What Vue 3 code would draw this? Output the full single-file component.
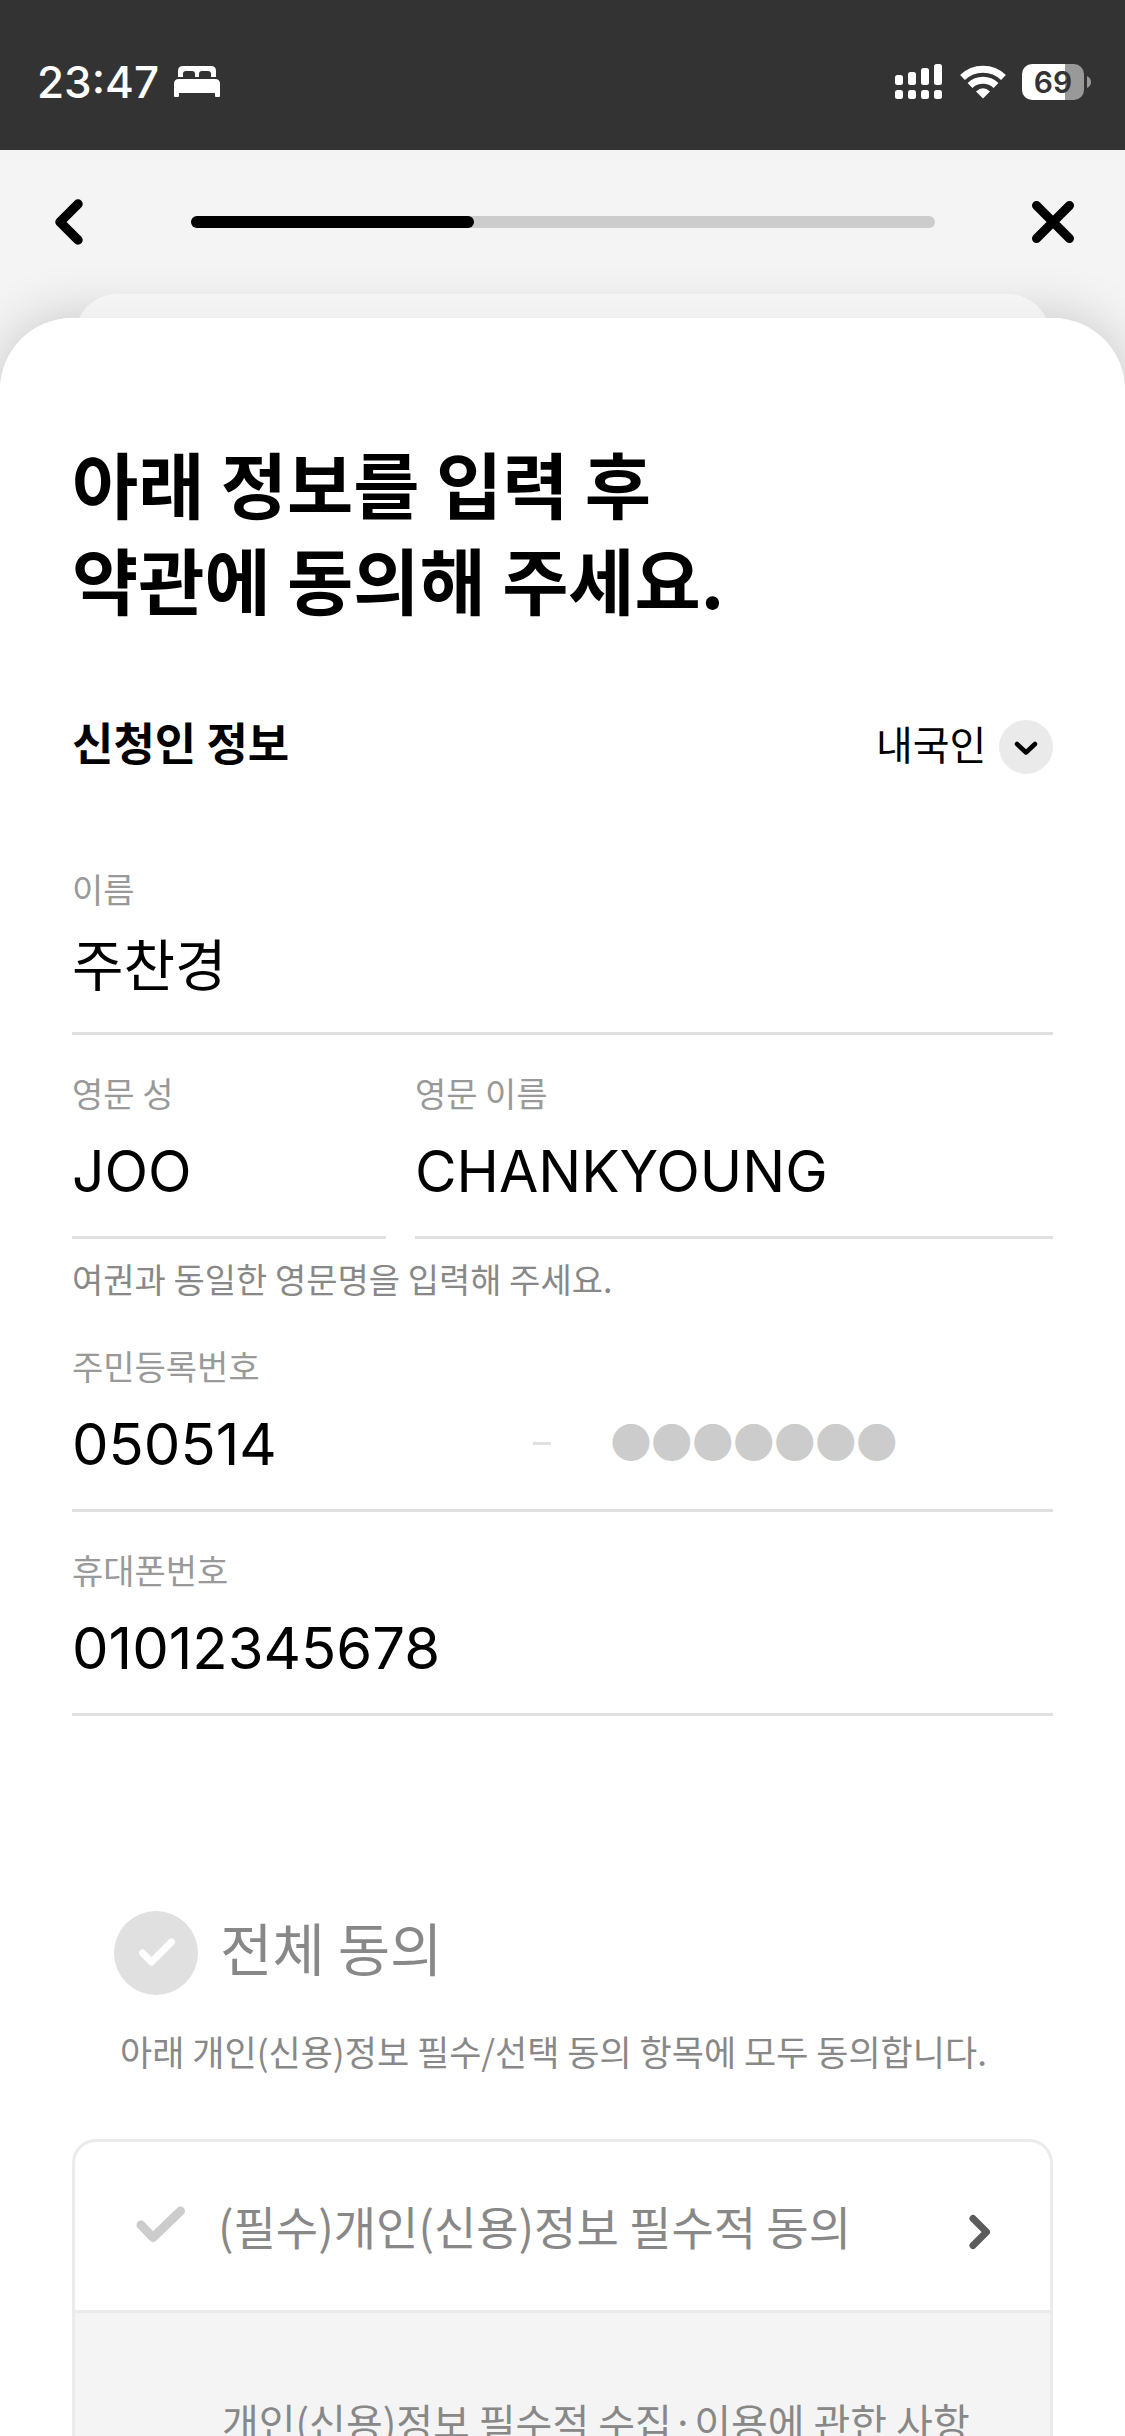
<script setup>
import { ref } from 'vue'

const progress = ref(38)
const nationality = ref('내국인')
const name = ref('주찬경')
const lastName = ref('JOO')
const firstName = ref('CHANKYOUNG')
const birth = ref('050514')
const secret = ref('●●●●●●●')
const phone = ref('01012345678')
const agreeAll = ref(false)
const agreeRequired = ref(false)

const bars = [
  { x: 0, y: 11 },
  { x: 13, y: 8 },
  { x: 26, y: 4 },
  { x: 39, y: 0 },
]
</script>

<template>
  <div class="app">
    <header class="status">
      <div class="status-side">
        <span class="time">23:47</span>
        <svg class="bed" width="46" height="32" viewBox="0 0 46 32" fill="#fff">
          <path d="M4 11V5q0-5 5-5h28q5 0 5 5v6h-5V8q0-3-3-3h-6q-3 0-3 3v3h-4V8q0-3-3-3h-6q-3 0-3 3v3z" />
          <path d="M0 30V18q0-5 5-5h36q5 0 5 5v12q0 1-1 1h-3q-1 0-1-1v-3H5v3q0 1-1 1H1q-1 0-1-1z" />
        </svg>
      </div>
      <div class="status-side">
        <svg class="signal" width="47" height="36" viewBox="0 0 47 36" fill="#fff">
          <g v-for="b in bars" :key="b.x">
            <rect :x="b.x" :y="b.y" width="8" :height="21 - b.y" rx="2.5" />
            <rect :x="b.x" y="26" width="8" height="9" rx="2.5" />
          </g>
        </svg>
        <svg class="wifi" width="46" height="34" viewBox="0 0 46 34" fill="none" stroke="#fff">
          <path d="M2.500 12.500A29.500 29.500 0 0 1 43.500 12.500" stroke-width="7" />
          <path d="M10 20.500A19 19 0 0 1 36 20.500" stroke-width="7" />
          <path d="M16 26.500Q23 20 30 26.500L23 33.500z" fill="#fff" stroke="none" />
        </svg>
        <div class="battery"><span>69</span></div>
        <svg width="4" height="12" viewBox="0 0 4 12"><path d="M0 0Q4 2 4 6T0 12z" fill="#999" /></svg>
      </div>
    </header>

    <nav class="nav">
      <button class="icon-btn" type="button" aria-label="이전">
        <svg width="46" height="54" viewBox="0 0 46 54" fill="none" stroke="#000" stroke-width="9.500" stroke-linecap="round" stroke-linejoin="round">
          <path d="M33 9L15 27L33 45" />
        </svg>
      </button>
      <div class="track" role="progressbar" :aria-valuenow="progress">
        <div class="bar" :style="{ width: progress + '%' }"></div>
      </div>
      <button class="icon-btn" type="button" aria-label="닫기">
        <svg width="46" height="54" viewBox="0 0 46 54" fill="none" stroke="#000" stroke-width="9" stroke-linecap="round">
          <path d="M6.500 10.500L39.500 43.500M39.500 10.500L6.500 43.500" />
        </svg>
      </button>
    </nav>

    <div class="stack">
      <div class="back-card"></div>
      <main class="sheet">
        <h1>아래 정보를 입력 후<br />약관에 동의해 주세요.</h1>

        <div class="section-head">
          <h2>신청인 정보</h2>
          <div class="select-wrap">
            <select v-model="nationality" aria-label="신청인 정보">
              <option>내국인</option>
            </select>
            <svg class="caret" width="54" height="54" viewBox="0 0 54 54">
              <circle cx="27" cy="27" r="27" fill="#eaeaea" />
              <path d="M18 24L27 32.500L36 24" fill="none" stroke="#000" stroke-width="4.500" stroke-linecap="round" stroke-linejoin="round" />
            </svg>
          </div>
        </div>

        <div class="field">
          <label for="name">이름</label>
          <input id="name" v-model="name" class="korean" type="text" />
        </div>

        <div class="pair">
          <div class="field last-name">
            <label for="last">영문 성</label>
            <input id="last" v-model="lastName" class="latin" type="text" />
          </div>
          <div class="field first-name">
            <label for="first">영문 이름</label>
            <input id="first" v-model="firstName" class="latin" type="text" />
          </div>
        </div>
        <p class="hint">여권과 동일한 영문명을 입력해 주세요.</p>

        <div class="field">
          <label for="birth">주민등록번호</label>
          <div class="split">
            <input id="birth" v-model="birth" class="birth" type="text" />
            <i class="dash"></i>
            <input v-model="secret" class="secret" type="text" aria-label="주민등록번호" />
          </div>
        </div>

        <div class="field">
          <label for="phone">휴대폰번호</label>
          <input id="phone" v-model="phone" type="tel" />
        </div>

        <label class="agree-all">
          <span class="tick big">
            <input v-model="agreeAll" type="checkbox" />
            <svg width="84" height="84" viewBox="0 0 84 84" fill="none" stroke="#fff" stroke-width="7" stroke-linecap="round" stroke-linejoin="round">
              <path d="M28.500 42L37.500 51L57.500 31" />
            </svg>
          </span>
          <span class="agree-text">전체 동의</span>
        </label>
        <p class="agree-note">아래 개인(신용)정보 필수/선택 동의 항목에 모두 동의합니다.</p>

        <section class="terms">
          <div class="terms-head">
            <label class="terms-label">
              <span class="tick">
                <input v-model="agreeRequired" type="checkbox" />
                <svg width="50" height="40" viewBox="0 0 50 40" fill="none" stroke="#ccc" stroke-width="9" stroke-linecap="round" stroke-linejoin="round">
                  <path d="M5 20L17 32.500L44.500 6" />
                </svg>
              </span>
              <span>(필수)개인(신용)정보 필수적 동의</span>
            </label>
            <button class="more" type="button" aria-label="(필수)개인(신용)정보 필수적 동의">
              <svg width="22" height="36" viewBox="0 0 22 36" fill="none" stroke="#5c5c5c" stroke-width="7" stroke-linecap="round" stroke-linejoin="round">
                <path d="M4 4.500L17.500 18L4 31.500" />
              </svg>
            </button>
          </div>
          <div class="terms-body">개인(신용)정보 필수적 수집·이용에 관한 사항</div>
        </section>
      </main>
    </div>
  </div>
</template>

<style>
body {
  margin: 0;
  background: #fff;
}
</style>

<style scoped>
* {
  box-sizing: border-box;
}
.app {
  display: flex;
  flex-direction: column;
  height: 100vh;
  overflow: hidden;
  background: #f4f4f4;
  color: #000;
  font-family: "Noto Sans CJK KR", sans-serif;
}
.app > * {
  flex-shrink: 0;
}
h1,
h2,
p {
  margin: 0;
}
button,
input,
select {
  margin: 0;
  padding: 0;
  border: 0;
  background: none;
  color: inherit;
  font-family: inherit;
  appearance: none;
  border-radius: 0;
  outline: none;
}
svg {
  display: block;
}

.status {
  display: flex;
  justify-content: space-between;
  height: 150px;
  padding: 14px 34px 0 37px;
  background: #333;
  color: #fff;
  font-family: Inter, sans-serif;
}
.status-side {
  display: flex;
  align-items: center;
}
.time {
  font-size: 44px;
  font-weight: 500;
}
.bed {
  margin-left: 15px;
}
.wifi {
  margin: 0 16px 0 18px;
}
.battery {
  width: 62px;
  height: 36px;
  margin-right: 3px;
  border-radius: 10px;
  background: linear-gradient(90deg, #fff 69%, #999 69%);
  color: #333;
  font-size: 30px;
  font-weight: 600;
  line-height: 36px;
  text-align: center;
}

.nav {
  display: flex;
  align-items: center;
  justify-content: space-between;
  height: 144px;
  padding: 0 49px 0 45px;
}
.icon-btn {
  width: 46px;
}
.track {
  flex: 1;
  height: 12px;
  margin: 0 95px 0 100px;
  border-radius: 6px;
  background: #ccc;
}
.bar {
  height: 100%;
  border-radius: 6px;
  background: #000;
}

.stack {
  position: relative;
  flex-grow: 1;
  margin-top: 24px;
  border-radius: 72px 72px 0 0;
  box-shadow: 0 0 54px rgba(0, 0, 0, 0.19);
}
/* previous card peeking out above the sheet */
.back-card {
  position: absolute;
  top: -24px;
  left: 75px;
  right: 75px;
  height: 72px;
  border-radius: 42px 42px 0 0;
  background: linear-gradient(#f5f5f5, #f0f0f0 24px);
}
.sheet {
  position: relative;
  min-height: 100%;
  padding: 116px 72px 60px;
  border-radius: 72px 72px 0 0;
  background: #fff;
}
h1 {
  font-size: 72px;
  font-weight: 700;
  line-height: 96px;
}
.section-head {
  display: flex;
  align-items: flex-start;
  justify-content: space-between;
  height: 54px;
  margin: 94px 0 57px;
}
h2 {
  font-size: 45px;
  font-weight: 700;
  line-height: 44px;
}
.select-wrap {
  position: relative;
}
select {
  display: block;
  height: 46px;
  padding-right: 66px;
  font-size: 40px;
  line-height: 46px;
}
.caret {
  position: absolute;
  top: 0;
  right: 0;
  pointer-events: none;
}

.field {
  height: 204px;
  padding-top: 34px;
  border-bottom: 3px solid #e0e0e0;
}
.field label {
  display: block;
  height: 48px;
  margin-bottom: 10px;
  color: #999;
  font-size: 34px;
  line-height: 48px;
}
.field input {
  display: block;
  width: 100%;
  height: 88px;
  font-family: Inter, "Noto Sans CJK KR", sans-serif;
  font-size: 58px;
}
.field .korean {
  height: 76px;
  font-family: "Noto Sans CJK KR", sans-serif;
  font-size: 56px;
}
.field .latin {
  font-size: 57px;
}
.pair {
  display: flex;
  gap: 29px;
}
.last-name {
  width: 32%;
}
.first-name {
  flex: 1;
}
.hint {
  padding: 16px 0 5px;
  color: #888;
  font-size: 34px;
  line-height: 48px;
}
.split {
  display: flex;
  align-items: flex-start;
  gap: 59px;
}
.split .birth {
  flex: 10;
  min-width: 0;
}
.split .secret {
  flex: 11;
  height: 80px;
  min-width: 0;
  color: #ccc;
  font-family: "Noto Sans CJK KR", sans-serif;
  font-size: 41px;
}
.dash {
  width: 18px;
  height: 3px;
  margin-top: 42px;
  background: #e0e0e0;
}

.agree-all {
  display: flex;
  align-items: center;
  gap: 22px;
  height: 84px;
  margin: 195px 0 32px 42px;
  color: #888;
  font-size: 57px;
}
.agree-text {
  line-height: 70px;
  align-self: flex-start;
}
.tick {
  display: grid;
  place-items: center;
}
.tick > * {
  grid-area: 1 / 1;
}
.tick input {
  width: 100%;
  height: 100%;
}
.big input {
  border-radius: 50%;
  background: #e0e0e0;
}
.tick svg {
  pointer-events: none;
}
.agree-note {
  margin: 0 0 64px 48px;
  color: #888;
  font-size: 35px;
  line-height: 48px;
}
.terms {
  overflow: hidden;
  border: 3px solid #ebebeb;
  border-bottom: 0;
  border-radius: 24px 24px 0 0;
  color: #888;
}
.terms-head {
  display: flex;
  align-items: center;
  justify-content: space-between;
  height: 171px;
  padding: 0 59px 3px 61px;
  border-bottom: 3px solid #ebebeb;
}
.terms-label {
  display: flex;
  align-items: center;
  gap: 32px;
  font-size: 46px;
  line-height: 60px;
}
.more {
  padding-top: 15px;
}
.terms-body {
  padding: 78px 0 60px 147px;
  background: #f4f4f4;
  font-size: 40px;
  line-height: 60px;
}
</style>
